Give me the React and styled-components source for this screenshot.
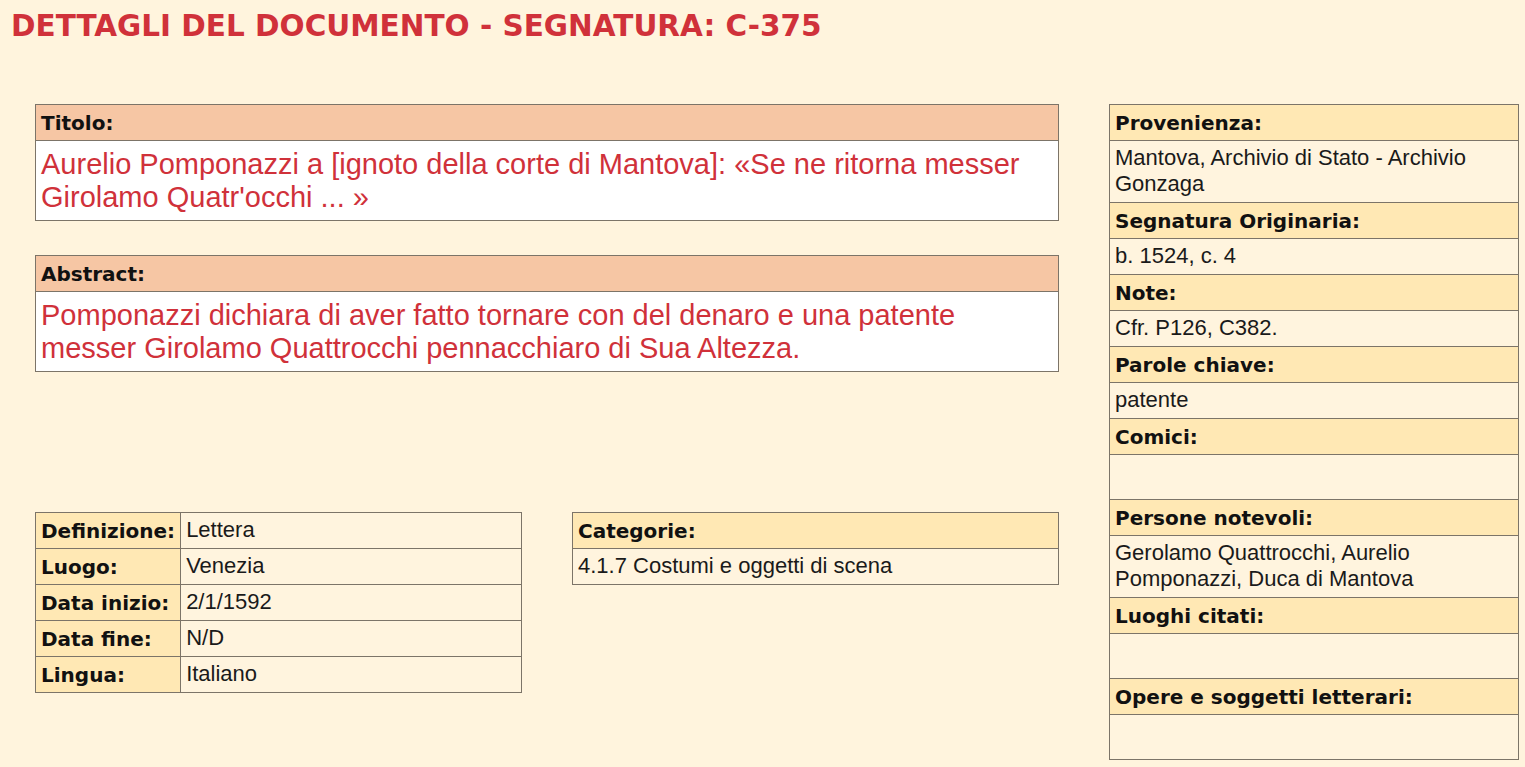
import styled, { createGlobalStyle } from "styled-components"

const GlobalStyle = createGlobalStyle`
  html, body {
    margin: 0;
    padding: 0;
    background: #fff4dd;
  }
  body {
    font-family: "Liberation Sans", Arial, sans-serif;
  }
`

const details = [
  ["Definizione:", "Lettera"],
  ["Luogo:", "Venezia"],
  ["Data inizio:", "2/1/1592"],
  ["Data fine:", "N/D"],
  ["Lingua:", "Italiano"],
]

const sideInfo = [
  ["Provenienza:", "Mantova, Archivio di Stato - Archivio Gonzaga"],
  ["Segnatura Originaria:", "b. 1524, c. 4"],
  ["Note:", "Cfr. P126, C382."],
  ["Parole chiave:", "patente"],
  ["Comici:", ""],
  ["Persone notevoli:", "Gerolamo Quattrocchi, Aurelio Pomponazzi, Duca di Mantova"],
  ["Luoghi citati:", ""],
  ["Opere e soggetti letterari:", ""],
]

export default function App() {
  return (
    <>
      <GlobalStyle />
      <Page>
        <Heading>DETTAGLI DEL DOCUMENTO - SEGNATURA: C-375</Heading>
        <Layout>
          <MainColumn>
            <TextBox>
              <BoxHeader>Titolo:</BoxHeader>
              <BoxBody>
                Aurelio Pomponazzi a [ignoto della corte di Mantova]: «Se ne ritorna messer Girolamo Quatr'occhi ... »
              </BoxBody>
            </TextBox>
            <TextBox>
              <BoxHeader>Abstract:</BoxHeader>
              <BoxBody>
                Pomponazzi dichiara di aver fatto tornare con del denaro e una patente messer Girolamo Quattrocchi pennacchiaro di Sua Altezza.
              </BoxBody>
            </TextBox>
            <BottomRow>
              <InfoTable>
                <tbody>
                  {details.map(([label, value]) => (
                    <tr key={label}>
                      <LabelCell>{label}</LabelCell>
                      <ValueCell>{value}</ValueCell>
                    </tr>
                  ))}
                </tbody>
              </InfoTable>
              <InfoTable>
                <tbody>
                  <tr><LabelCell $tall>Categorie:</LabelCell></tr>
                  <tr><ValueCell>4.1.7 Costumi e oggetti di scena</ValueCell></tr>
                </tbody>
              </InfoTable>
            </BottomRow>
          </MainColumn>
          <SideTable>
            <tbody>
              {sideInfo.map(([label, value]) => [
                <tr key={label}><LabelCell $tall>{label}</LabelCell></tr>,
                <tr key={label + "v"}><ValueCell $empty={!value}>{value}</ValueCell></tr>,
              ])}
            </tbody>
          </SideTable>
        </Layout>
      </Page>
    </>
  )
}

const Page = styled.div`
  padding: 8px 6px 8px 11px;
`
const Heading = styled.h1`
  margin: 0;
  font-family: "DejaVu Sans", Verdana, sans-serif;
  font-weight: 700;
  font-size: 29.5px;
  line-height: 36px;
  color: #d0313a;
`
const Layout = styled.div`
  display: flex;
  align-items: flex-start;
  gap: 50px;
  margin-top: 60px;
  padding-left: 24px;
`
const MainColumn = styled.div`
  width: 1024px;
  display: flex;
  flex-direction: column;
  gap: 34px;
`
const TextBox = styled.section`
  border: 1px solid #7c7468;
  background: #ffffff;
`
const BoxHeader = styled.div`
  background: #f6c6a4;
  border-bottom: 1px solid #7c7468;
  padding: 0 5px;
  height: 35px;
  line-height: 36px;
  font-family: "DejaVu Sans", Verdana, sans-serif;
  font-weight: 700;
  font-size: 20px;
  color: #111;
`
const BoxBody = styled.div`
  padding: 7px 5px 6px;
  font-size: 29px;
  line-height: 33px;
  color: #d0313a;
`
const BottomRow = styled.div`
  display: flex;
  align-items: flex-start;
  gap: 50px;
  margin-top: 106px;
`
const InfoTable = styled.table`
  border-collapse: collapse;
  border: 1px solid #7c7468;
  width: 487px;
`
const SideTable = styled(InfoTable)`
  width: 410px;
`
const LabelCell = styled.td`
  border: 1px solid #7c7468;
  background: #ffe8b4;
  padding: 0 5px;
  height: ${(props) => (props.$tall ? "36px" : "35px")};
  box-sizing: border-box;
  white-space: nowrap;
  font-family: "DejaVu Sans", Verdana, sans-serif;
  font-weight: 700;
  font-size: 20px;
  line-height: 24px;
  color: #111;
  width: 1px;
`
const ValueCell = styled.td`
  border: 1px solid #7c7468;
  background: #fff4de;
  padding: 4px 5px 5px;
  height: ${(props) => (props.$empty ? "45px" : "36px")};
  box-sizing: border-box;
  font-size: 22px;
  line-height: 26px;
  color: #1a1a1a;
`
